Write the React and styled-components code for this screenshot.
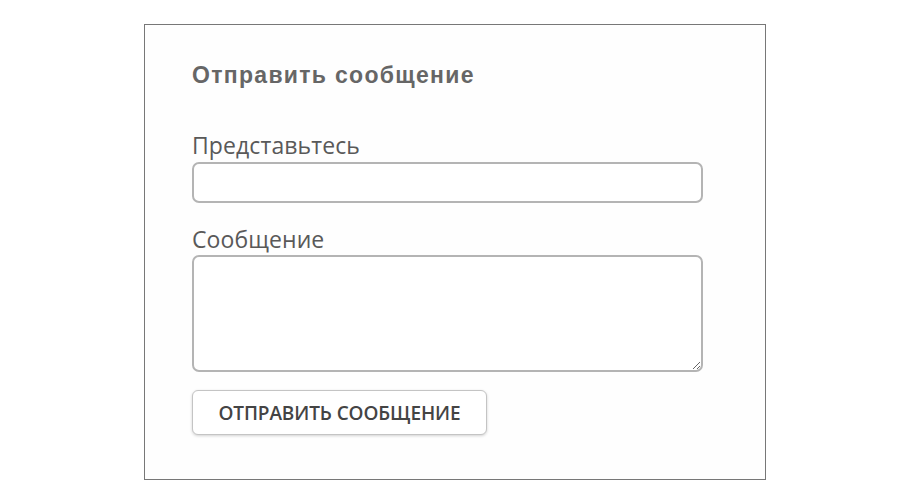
import React from 'react';
import styled, { createGlobalStyle } from 'styled-components';

const GlobalStyle = createGlobalStyle`
  body {
    margin: 0;
    background: #ffffff;
  }
`;

const Panel = styled.section`
  box-sizing: border-box;
  width: 622px;
  height: 456px;
  margin: 24px 0 0 144px;
  padding: 36px 0 0 47px;
  border: 1px solid #777777;
  background: #fefefe;
`;

const Title = styled.h2`
  margin: 0 0 41px;
  font-family: "Liberation Sans", Arial, sans-serif;
  font-size: 23px;
  line-height: 28px;
  font-weight: bold;
  letter-spacing: 1.3px;
  color: #666666;
`;

const Form = styled.form`
  display: flex;
  flex-direction: column;
  width: 511px;
`;

const Field = styled.div`
  display: flex;
  flex-direction: column;
  margin-bottom: ${p => p.gap || 18}px;
`;

const Label = styled.label`
  font-family: "Open Sans", sans-serif;
  font-size: 23px;
  line-height: 30px;
  letter-spacing: 0.1px;
  color: #595959;
  margin-bottom: ${p => p.space || 1}px;
`;

const Input = styled.input`
  box-sizing: border-box;
  height: 41px;
  width: 100%;
  border: 2px solid #b4b4b4;
  border-radius: 7px;
  background: #fff;
  outline: none;
`;

const TextArea = styled.textarea`
  box-sizing: border-box;
  height: 117px;
  width: 100%;
  border: 2px solid #b4b4b4;
  border-radius: 7px;
  background: #fff;
  outline: none;
  resize: vertical;
`;

const Button = styled.button`
  align-self: flex-start;
  box-sizing: border-box;
  width: 295px;
  height: 45px;
  border: 1px solid #c4c4c4;
  border-radius: 6px;
  background: #ffffff;
  box-shadow: 0 1px 3px rgba(0, 0, 0, 0.18);
  font-family: "Open Sans", sans-serif;
  font-size: 19px;
  font-weight: 600;
  letter-spacing: -0.1px;
  text-transform: uppercase;
  color: #444444;
  cursor: pointer;
`;

export default function App() {
  return (
    <>
      <GlobalStyle />
      <Panel>
        <Title>Отправить сообщение</Title>
        <Form onSubmit={e => e.preventDefault()}>
          <Field gap={21}>
            <Label htmlFor="name" space={2}>Представьтесь</Label>
            <Input id="name" type="text" />
          </Field>
          <Field gap={18}>
            <Label htmlFor="msg">Сообщение</Label>
            <TextArea id="msg" />
          </Field>
          <Button type="submit">Отправить сообщение</Button>
        </Form>
      </Panel>
    </>
  );
}
